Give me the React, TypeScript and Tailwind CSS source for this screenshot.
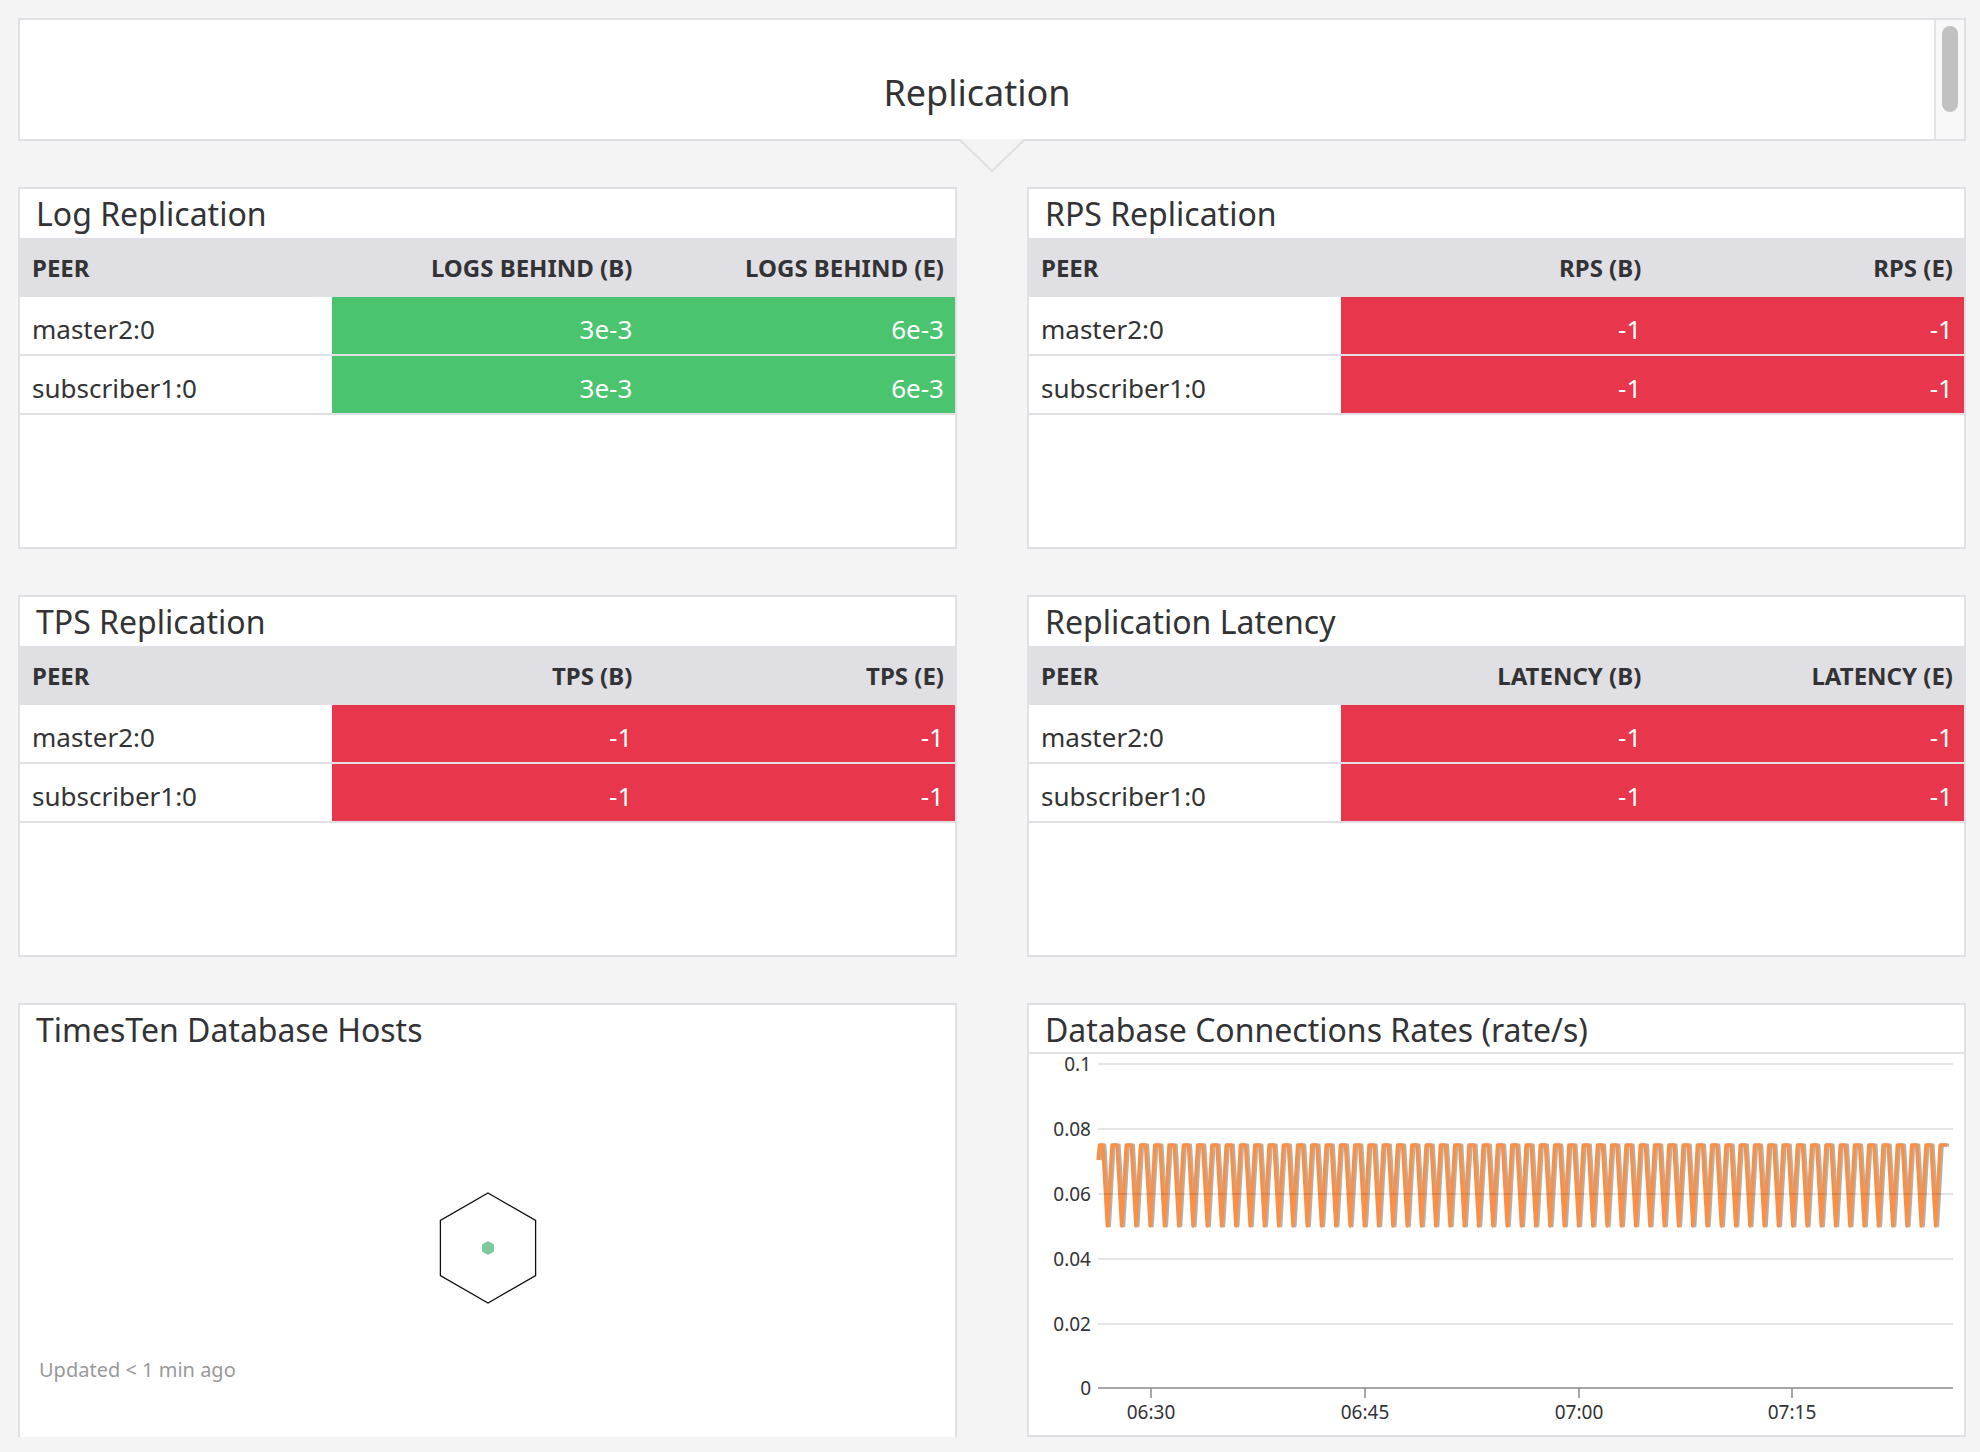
import React from "react";

type Row = { peer: string; b: string; e: string };

const rows = (b: string, e: string): Row[] => [
  { peer: "master2:0", b, e },
  { peer: "subscriber1:0", b, e },
];

const PanelTitle = ({ text }: { text: string }) => (
  <div className="h-[49px] pl-[16px] pt-[9px] text-[32px] leading-none text-[#333336]">{text}</div>
);

const PeerTable = ({
  title,
  colB,
  colE,
  data,
  good,
}: {
  title: string;
  colB: string;
  colE: string;
  data: Row[];
  good: boolean;
}) => {
  const cell = good ? "bg-[#4bc46f]" : "bg-[#e8364c]";
  return (
    <div className="h-[362px] border-2 border-[#dfdfe4] bg-white">
      <PanelTitle text={title} />
      <div className="grid grid-cols-3 h-[59px] items-center bg-[#e0dfe3] text-[24px] font-bold uppercase text-[#333336]">
        <div className="pl-[12px]">PEER</div>
        <div className="pr-[11px] text-right">{colB}</div>
        <div className="pr-[11px] text-right">{colE}</div>
      </div>
      {data.map((r) => (
        <div
          key={r.peer}
          className="grid grid-cols-3 h-[59px] border-b-2 border-[#dfdfe4] text-[26px] text-[#333336]"
        >
          <div className="pl-[12px] pt-[13px]">{r.peer}</div>
          <div className={"pr-[11px] pt-[13px] text-right text-white " + cell}>{r.b}</div>
          <div className={"pr-[11px] pt-[13px] text-right text-white " + cell}>{r.e}</div>
        </div>
      ))}
    </div>
  );
};

const HostsPanel = () => (
  <div className="h-[434px] border-2 border-b-0 border-[#dfdfe4] bg-white">
    <PanelTitle text="TimesTen Database Hosts" />
    <div className="flex justify-center pt-[137px]">
      <svg width="100" height="114" viewBox="-50 -57 100 114">
        <polygon
          points="0,-55 47.6,-27.5 47.6,27.5 0,55 -47.6,27.5 -47.6,-27.5"
          fill="none"
          stroke="#111"
          strokeWidth="1.3"
        />
        <polygon points="0,-7 6,-3.5 6,3.5 0,7 -6,3.5 -6,-3.5" fill="#7ec99c" />
      </svg>
    </div>
    <div className="pl-[19px] pt-[50px] text-[20px] text-[#999999]">Updated &lt; 1 min ago</div>
  </div>
);

// one series of the rate chart, a sawtooth between 0.05 and 0.075
const wave = (dx: number) => {
  const pts: string[] = [];
  const step = 14.28;
  const b0 = 1107.3 - 1029;
  const top = 1145 - 1054;
  const bottom = 1226 - 1054;
  pts.push(`${69 + dx},${1160 - 1054}`);
  pts.push(`${70.5 + dx},${top}`);
  for (let k = 0; k < 59; k++) {
    const bx = b0 + k * step + dx;
    pts.push(`${bx - 4.6},${top}`);
    pts.push(`${bx},${bottom}`);
    pts.push(`${bx + 4.6},${top}`);
  }
  pts.push(`${918 + dx},${top}`);
  return pts.join(" ");
};

const ChartPanel = () => {
  const grid = [
    { y: 10, label: "0.1" },
    { y: 75, label: "0.08" },
    { y: 140, label: "0.06" },
    { y: 205, label: "0.04" },
    { y: 270, label: "0.02" },
  ];
  const ticks = [
    { x: 122, label: "06:30" },
    { x: 336, label: "06:45" },
    { x: 550, label: "07:00" },
    { x: 763, label: "07:15" },
  ];
  return (
    <div className="h-[434px] border-2 border-[#dfdfe4] bg-white">
      <div className="h-[49px] border-b-2 border-[#e2e2e6] pl-[16px] pt-[9px] text-[32px] leading-none text-[#333336]">
        Database Connections Rates (rate/s)
      </div>
      <svg
        width="935"
        height="381"
        className="block overflow-visible"
        style={{ fontFamily: "'Noto Sans', sans-serif" }}
      >
        <polyline points={wave(2.2)} fill="none" stroke="#b8aea4" strokeWidth="3" strokeLinejoin="round" />
        <polyline points={wave(0)} fill="none" stroke="#fb8f45" strokeWidth="3.4" strokeLinejoin="round" />
        {grid.map((g) => (
          <g key={g.label}>
            <line x1="69" x2="924" y1={g.y} y2={g.y} stroke="rgba(20,20,40,0.11)" strokeWidth="2" />
            <text x="62" y={g.y + 7} textAnchor="end" fontSize="19" fill="#333336">
              {g.label}
            </text>
          </g>
        ))}
        <line x1="69" x2="924" y1="334" y2="334" stroke="#8a8a8e" strokeWidth="1.5" />
        <text x="62" y="341" textAnchor="end" fontSize="19" fill="#333336">
          0
        </text>
        {ticks.map((t) => (
          <g key={t.label}>
            <line x1={t.x} x2={t.x} y1="334" y2="344" stroke="#8a8a8e" strokeWidth="1.5" />
            <text x={t.x} y="365" textAnchor="middle" fontSize="19" fill="#333336">
              {t.label}
            </text>
          </g>
        ))}
      </svg>
    </div>
  );
};

export default function App() {
  return (
    <div
      className="h-[1452px] overflow-hidden bg-[#f4f4f4] pl-[18px] pr-[14px] pt-[18px]"
      style={{ fontFamily: "'Noto Sans', 'Open Sans', sans-serif" }}
    >
      {/* header widget */}
      <div className="relative flex h-[123px] border-2 border-[#dfdfe4] bg-white">
        <div className="flex-1 pt-[55px] text-center text-[36px] leading-none text-[#333336]">Replication</div>
        <div className="w-[30px] border-l-2 border-[#e4e4e8] bg-[#f8f8f8] pl-[6px] pt-[6px]">
          <div className="h-[86px] w-[16px] rounded-full bg-[#c1c1c1]" />
        </div>
        <svg
          width="66"
          height="34"
          className="absolute left-1/2 top-full -translate-x-1/2"
          viewBox="-1 0 66 34"
        >
          <polygon points="0,0 32,32 64,0" fill="#f4f4f4" />
          <polyline points="0,1 32,32 64,1" fill="none" stroke="#dfdfe4" strokeWidth="2" />
        </svg>
      </div>

      <div className="mt-[46px] grid grid-cols-2 gap-x-[70px] gap-y-[46px]">
        <PeerTable title="Log Replication" colB="Logs Behind (B)" colE="Logs Behind (E)" data={rows("3e-3", "6e-3")} good />
        <PeerTable title="RPS Replication" colB="RPS (B)" colE="RPS (E)" data={rows("-1", "-1")} good={false} />
        <PeerTable title="TPS Replication" colB="TPS (B)" colE="TPS (E)" data={rows("-1", "-1")} good={false} />
        <PeerTable title="Replication Latency" colB="Latency (B)" colE="Latency (E)" data={rows("-1", "-1")} good={false} />
        <HostsPanel />
        <ChartPanel />
      </div>
    </div>
  );
}
